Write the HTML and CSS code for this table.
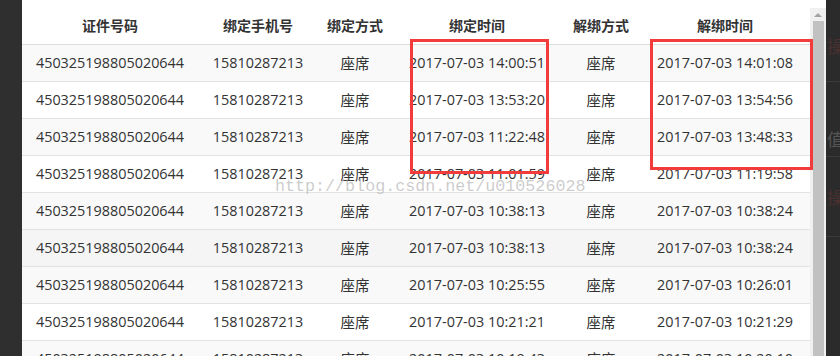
FILE: index.html
```html
<!DOCTYPE html>
<html lang="zh-CN">
<head>
<meta charset="utf-8">
<title>绑定记录</title>
<link rel="stylesheet" href="styles.css">
</head>
<body>
<div class="page">
  <div class="side-left"></div>
  <div class="modal">
    <div class="table-wrap">
      <table class="grid">
        <colgroup>
          <col class="c1"><col class="c2"><col class="c3"><col class="c4"><col class="c5"><col class="c6">
        </colgroup>
        <thead>
          <tr><th>证件号码</th><th>绑定手机号</th><th>绑定方式</th><th>绑定时间</th><th>解绑方式</th><th>解绑时间</th></tr>
        </thead>
        <tbody>
          <tr class="odd"><td>450325198805020644</td><td>15810287213</td><td>座席</td><td>2017-07-03 14:00:51</td><td>座席</td><td>2017-07-03 14:01:08</td></tr>
          <tr><td>450325198805020644</td><td>15810287213</td><td>座席</td><td>2017-07-03 13:53:20</td><td>座席</td><td>2017-07-03 13:54:56</td></tr>
          <tr class="odd"><td>450325198805020644</td><td>15810287213</td><td>座席</td><td>2017-07-03 11:22:48</td><td>座席</td><td>2017-07-03 13:48:33</td></tr>
          <tr><td>450325198805020644</td><td>15810287213</td><td>座席</td><td>2017-07-03 11:01:59</td><td>座席</td><td>2017-07-03 11:19:58</td></tr>
          <tr class="odd"><td>450325198805020644</td><td>15810287213</td><td>座席</td><td>2017-07-03 10:38:13</td><td>座席</td><td>2017-07-03 10:38:24</td></tr>
          <tr class="hover"><td>450325198805020644</td><td>15810287213</td><td>座席</td><td>2017-07-03 10:38:13</td><td>座席</td><td>2017-07-03 10:38:24</td></tr>
          <tr class="odd"><td>450325198805020644</td><td>15810287213</td><td>座席</td><td>2017-07-03 10:25:55</td><td>座席</td><td>2017-07-03 10:26:01</td></tr>
          <tr><td>450325198805020644</td><td>15810287213</td><td>座席</td><td>2017-07-03 10:21:21</td><td>座席</td><td>2017-07-03 10:21:29</td></tr>
          <tr class="odd"><td>450325198805020644</td><td>15810287213</td><td>座席</td><td>2017-07-03 10:19:43</td><td>座席</td><td>2017-07-03 10:20:10</td></tr>
        </tbody>
      </table>
    </div>
    <div class="scrollbar">
      <div class="arrow"></div>
      <div class="thumb"></div>
    </div>
  </div>
  <div class="side-right">
    <div class="rrow r1">操</div>
    <div class="rrow r2"></div>
    <div class="rrow r3">值</div>
    <div class="rrow r4">操</div>
    <div class="rrow r5"></div>
  </div>

  <div class="mark box1"></div>
  <div class="mark box2"></div>
  <div class="watermark">http://blog.csdn.net/u010526028</div>
</div>
</body>
</html>
```
FILE: styles.css
```css
html, body {
  margin: 0;
  padding: 0;
  background: #2d2d2d;
}
.page {
  position: relative;
  display: flex;
  width: 840px;
  height: 356px;
  overflow: hidden;
  font-family: "Open Sans", "Noto Sans CJK SC", sans-serif;
  color: #333;
}
.side-left {
  width: 22px;
  flex: none;
  background: #2f2f2f;
}
.modal {
  width: 804px;
  flex: none;
  display: flex;
  background: #fff;
}
.table-wrap {
  width: 788px;
  flex: none;
}
.grid {
  width: 788px;
  table-layout: fixed;
  border-collapse: collapse;
}
.c1 { width: 176px; }
.c2 { width: 120px; }
.c3 { width: 74px; }
.c4 { width: 170px; }
.c5 { width: 78px; }
.c6 { width: 170px; }
.grid th {
  height: 44px;
  box-sizing: border-box;
  padding: 6px 0 0;
  font-family: "Noto Sans CJK SC", sans-serif;
  font-size: 14px;
  font-weight: 700;
  text-align: center;
  border-bottom: 1px solid #ddd;
  white-space: nowrap;
}
.grid td {
  height: 37px;
  box-sizing: border-box;
  padding: 0;
  font-size: 14.4px;
  text-align: center;
  vertical-align: middle;
  border-bottom: 1px solid #e2e2e2;
  white-space: nowrap;
}
.grid tr.odd td { background: #f9f9f9; }
.grid tr.hover td { background: #f5f5f5; }

.scrollbar {
  width: 16px;
  flex: none;
  margin-top: 8px;
  background: #f0f0f0;
  display: flex;
  flex-direction: column;
  align-items: center;
}
.arrow {
  width: 0;
  height: 0;
  margin: 5px 0 4px;
  border-left: 4px solid transparent;
  border-right: 4px solid transparent;
  border-bottom: 4px solid #a3a3a3;
}
.thumb {
  width: 11px;
  flex: 1;
  background: #c1c1c1;
}

.side-right {
  flex: 1;
  background: #2b2b2b;
  display: flex;
  flex-direction: column;
  font-family: "Noto Sans CJK SC", sans-serif;
  font-size: 17px;
  color: #4a3030;
}
.rrow {
  border-bottom: 1px solid #3b3b3b;
  box-sizing: border-box;
  padding-left: 1px;
  display: flex;
  align-items: center;
}
.r1 { height: 82px; padding-top: 10px; }
.r2 { height: 75px; }
.r3 { height: 38px; color: #555; margin-top: -38px; border-bottom: none; }
.r4 { height: 80px; }
.r5 { flex: 1; border-bottom: none; }

.mark {
  position: absolute;
  border: 3px solid #f23b3b;
  box-sizing: border-box;
}
.box1 { left: 410px; top: 39px; width: 139px; height: 135px; }
.box2 { left: 650px; top: 39px; width: 163px; height: 131px; }

.watermark {
  position: absolute;
  left: 275px;
  top: 177px;
  font-family: "Liberation Mono", monospace;
  font-size: 16.7px;
  line-height: 20px;
  color: rgba(170, 170, 170, 0.6);
  white-space: nowrap;
}
```
